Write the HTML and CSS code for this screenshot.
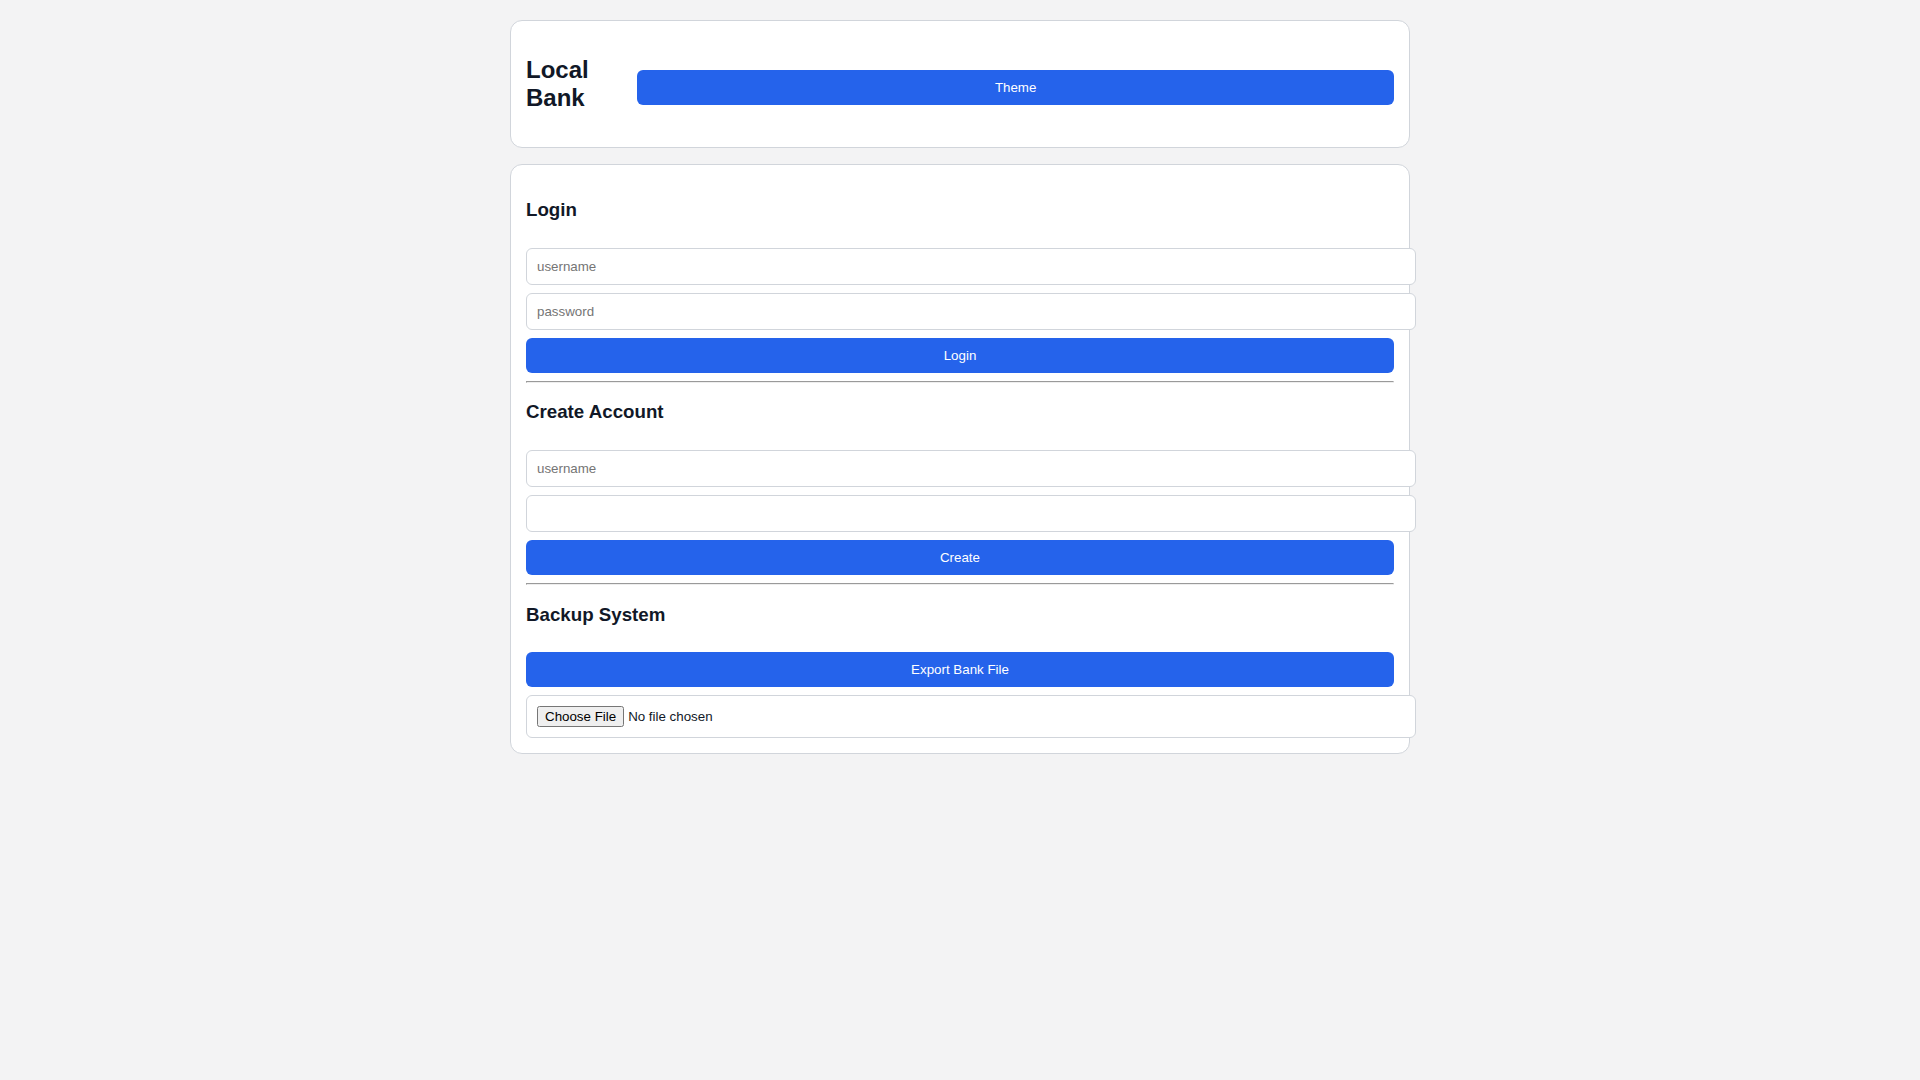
FILE: index.html
```html
<!DOCTYPE html>
<html lang="en">
<head>
<meta charset="utf-8">
<title>Local Bank</title>
<link rel="stylesheet" href="styles.css">
</head>
<body>
<div class="app">
  <header class="card topbar">
    <h2 class="brand">Local Bank</h2>
    <button class="btn theme-btn" type="button">Theme</button>
  </header>

  <main class="card panel">
    <h3 class="section-title">Login</h3>
    <input class="field" type="text" placeholder="username">
    <input class="field" type="password" placeholder="password">
    <button class="btn block" type="button">Login</button>

    <hr class="divider">

    <h3 class="section-title">Create Account</h3>
    <input class="field" type="text" placeholder="username">
    <input class="field" type="password">
    <button class="btn block" type="button">Create</button>

    <hr class="divider">

    <h3 class="section-title tight">Backup System</h3>
    <button class="btn block" type="button">Export Bank File</button>
    <input class="field file" type="file">
  </main>
</div>
</body>
</html>
```

FILE: styles.css
```css
html, body {
  margin: 0;
  padding: 0;
}

body {
  background: #f3f3f4;
  color: #111827;
  font-family: "Liberation Sans", Arial, sans-serif;
  font-size: 16px;
}

.app {
  max-width: 900px;
  margin: 20px auto;
}

.card {
  background: #ffffff;
  border: 1px solid #d1d5db;
  border-radius: 12px;
  padding: 15px;
  margin-bottom: 16px;
}

.topbar {
  display: flex;
  align-items: center;
}

.brand {
  font-size: 24px;
  font-weight: bold;
  margin: 19.92px 0;
  color: #111827;
}

.btn {
  box-sizing: border-box;
  background: #2563eb;
  color: #ffffff;
  border: none;
  border-radius: 6px;
  padding: 10px;
  height: 35px;
  line-height: 15px;
  font-family: "Liberation Sans", Arial, sans-serif;
  font-size: 13.333px;
  cursor: pointer;
}

.theme-btn {
  width: 100%;
  margin-top: 8px;
}

.btn.block {
  display: block;
  width: 100%;
  margin: 0 0 8px 0;
}

.section-title {
  font-size: 18.72px;
  font-weight: bold;
  margin: 18.72px 0 27px 0;
  color: #111827;
}

.section-title.tight {
  margin-bottom: 26px;
}

.field {
  display: block;
  width: 100%;
  height: 15px;
  padding: 10px;
  margin: 0 0 8px 0;
  border: 1px solid #d1d5db;
  border-radius: 6px;
  background: #ffffff;
  font-family: "Liberation Sans", Arial, sans-serif;
  font-size: 13.333px;
  color: #111827;
}

.field.file {
  height: 21px;
  margin-bottom: 0;
}

.divider {
  margin: 0 0 8px 0;
  border: 1px inset;
  color: gray;
}
```
